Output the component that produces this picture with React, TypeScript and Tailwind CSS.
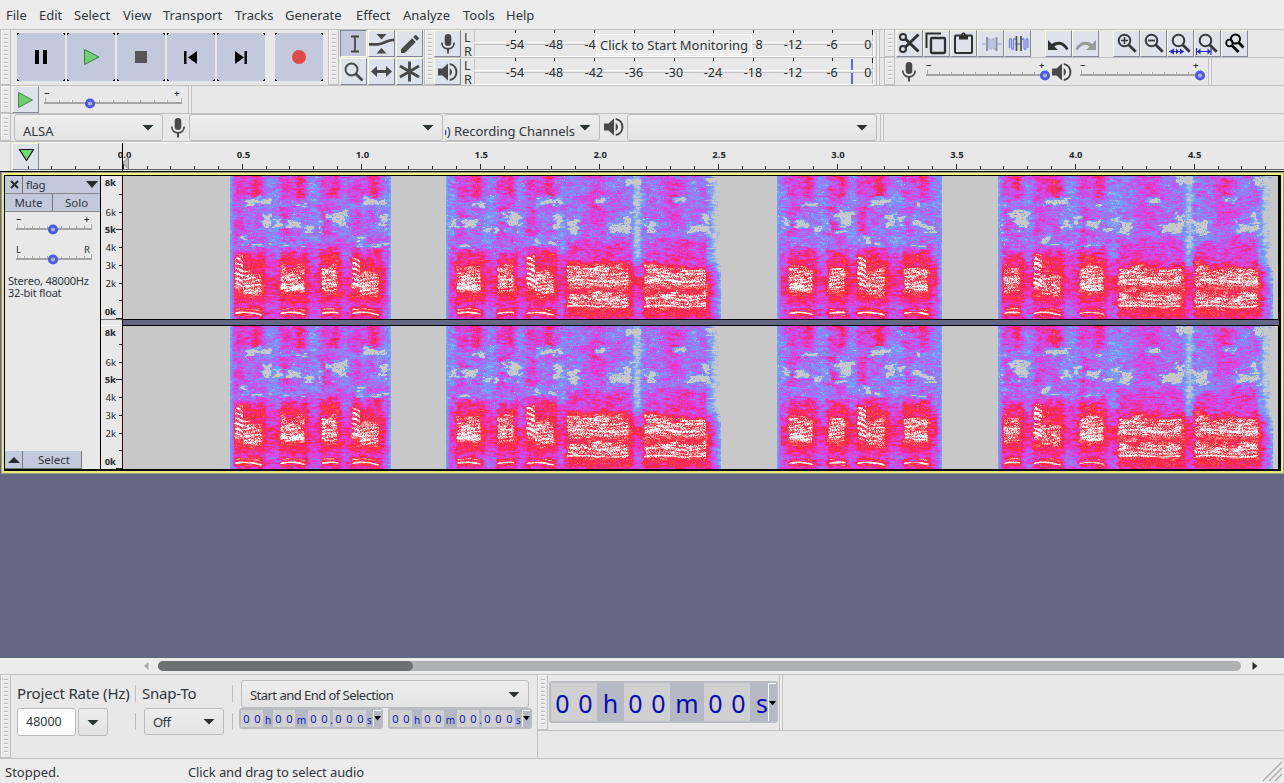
import React, { useMemo } from "react";

const FONT = "font-['Noto_Sans','Open_Sans',sans-serif]";

/* ------------------------------------------------------------------ */
/* Spectrogram                                                         */
/* ------------------------------------------------------------------ */

type Syl = { kind: "A" | "B" | "C" | "L"; a: number; b: number };
type Block = { start: number; end: number; syls: Syl[] };
type Patch = [number, number, number, number, number];

const A = (a: number): Syl => ({ kind: "A", a, b: a + 28 });
const B = (a: number): Syl => ({ kind: "B", a, b: a + 25 });
const C = (a: number): Syl => ({ kind: "C", a, b: a + 17 });
const L = (a: number): Syl => ({ kind: "L", a, b: a + 64 });

const BLOCKS: Block[] = [
  { start: 107, end: 268, syls: [A(111), B(157), C(198), A(228)] },
  { start: 323, end: 598, syls: [B(333), C(374), A(403), L(443), L(521)] },
  { start: 654, end: 819, syls: [B(665), C(705), A(734), B(780)] },
  { start: 875, end: 1150, syls: [C(880), A(910), B(956), L(995), L(1072)] },
];

/* left, top, right, bottom, strength */
const PATCHES: Record<Syl["kind"], Patch[]> = {
  A: [[12, 22, 36, 29, 0.5], [29, 39, 36, 51, 1], [7, 61, 14, 68, 0.7], [16, 66, 38, 69, 0]],
  B: [[-5, 41, 0, 50, 1], [8, 44, 20, 50, 1.2], [24, 50, 33, 56, 0.6], [15, 27, 28, 30, 0.3], [0, 68, 24, 70, 0]],
  C: [[12, 35, 24, 49, 1.2], [5, 37, 12, 42, 0.2], [8, 54, 20, 56, 0.1], [-3, 42, 0, 57, 0.2]],
  L: [[-9, 41, 0, 46, 0.7], [2, 46, 11, 57, 1.6], [30, 22, 41, 26, 0.5], [44, 48, 64, 56, 1.3], [57, 37, 65, 48, 0.8], [60, 1, 74, 8, 0.8]],
};

function hash(x: number, y: number, s: number) {
  let h = (x * 374761393 + y * 668265263 + s * 2147483647) | 0;
  h = Math.imul(h ^ (h >>> 13), 1274126177);
  h = Math.imul(h ^ (h >>> 15), 2246822519);
  return ((h ^ (h >>> 16)) >>> 0) / 4294967296;
}

function noise(x: number, y: number, s: number) {
  const xi = Math.floor(x);
  const yi = Math.floor(y);
  const fx = x - xi;
  const fy = y - yi;
  const u = fx * fx * (3 - 2 * fx);
  const v = fy * fy * (3 - 2 * fy);
  const p = hash(xi, yi, s) * (1 - u) + hash(xi + 1, yi, s) * u;
  const q = hash(xi, yi + 1, s) * (1 - u) + hash(xi + 1, yi + 1, s) * u;
  return (p * (1 - v) + q * v) * 2 - 1;
}

const smooth = (e0: number, e1: number, x: number) => {
  const t = Math.min(1, Math.max(0, (x - e0) / (e1 - e0)));
  return t * t * (3 - 2 * t);
};
const band = (a: number, b: number, x: number, w: number) =>
  smooth(a - w, a + w, x) * (1 - smooth(b - w, b + w, x));

function curve(y: number, pts: [number, number][]) {
  if (y <= pts[0][0]) return pts[0][1];
  for (let i = 1; i < pts.length; i++) {
    if (y <= pts[i][0]) {
      const [y0, v0] = pts[i - 1];
      const [y1, v1] = pts[i];
      return v0 + ((v1 - v0) * (y - y0)) / (y1 - y0);
    }
  }
  return pts[pts.length - 1][1];
}

const GAP: [number, number][] = [[0, 0.33], [20, 0.31], [60, 0.3], [74, 0.37], [90, 0.48], [103, 0.58], [114, 0.56], [124, 0.48], [131, 0.43], [143, 0.46]];
const SHORT: [number, number][] = [[0, 0.48], [18, 0.47], [26, 0.39], [60, 0.38], [70, 0.43], [77, 0.57], [84, 0.63], [118, 0.67], [125, 0.6], [130, 0.5], [134, 0.61], [143, 0.52]];
const LONG: [number, number][] = [[0, 0.35], [20, 0.37], [45, 0.35], [60, 0.37], [66, 0.47], [84, 0.51], [89, 0.64], [93, 0.69], [132, 0.69], [138, 0.63], [143, 0.54]];

function level(x: number, y: number, blk: Block) {
  const streak = noise(x / 5, y / 1.2, 3);
  const fine = hash(x, y, 5) * 2 - 1;
  const mid = noise(x / 3.500, y / 2.200, 7);
  const wide = noise(x / 11, y / 8, 9);
  const yj = y + wide * 3 + mid * 1.5;
  const texture = streak * 0.085 + mid * 0.06 + fine * 0.055 + wide * 0.055;

  let v = curve(yj, GAP) + texture;

  for (const s of blk.syls) {
    const rx = x - s.a;
    const soft = y < 76 ? 5 : 2.500;
    const inside = band(s.a - 1, s.b + 3, x + mid * 2, soft);
    const n = s.b - s.a;
    let t: number;
    if (s.kind === "L") {
      t = curve(yj, LONG) + texture;
      if (y < 62) t += 0.14 * band(22, 38, rx, 9) * band(-4, 50, y, 8);
      if (y > 132) t += 0.07 * band(138.500, 140, y, 0.8);
      const cols = band(0, n - 2, rx, 1.5);
      const upper = band(92, 111, yj, 3);
      const lower = band(117, 131, yj, 2);
      const wob = Math.sin(rx / 9) * 1.1;
      t += (upper + lower) * cols * (0.13 + fine * 0.08 + mid * 0.02 - streak * 0.02 + 0.045 * Math.sin((y + wob) * 1.7));
      t += 0.08 * cols * (band(103, 106, y + wob, 1.5) + band(121, 123, y + wob, 1));
      t += 0.16 * cols * band(129, 130.300, y + wob * 0.6, 0.8);
    } else {
      t = curve(yj, SHORT) + texture;
      if (y < 22) t += 0.12 * band(n * 0.62, n * 0.94, rx, 4);
      if (y > 30 && y < 60) t += 0.1 * band(-2, 9, rx, 4);
      const sweep = s.kind === "A" && rx < 9;
      const coreTop = sweep ? 79 : s.kind === "A" ? 96 : 91;
      const coreBottom = sweep ? 112 : s.kind === "A" ? 119 : 115;
      const core = band(coreTop, coreBottom, yj, 4) * band(0, n - 1, rx, 1.2);
      const slope = sweep ? -Math.pow(rx / 9, 2) * 4 : rx * 0.14;
      const stripe = Math.sin((y + slope) * (sweep ? 1.25 : 1.7) + mid * 0.6);
      t += core * (0.165 + stripe * (sweep ? 0.15 : 0.05) + mid * 0.02 - streak * 0.02 + fine * 0.07);
      if (s.kind === "B") t += 0.11 * band(107, 113, y - rx * 0.1, 2) * band(1, 24, rx, 1);
      if (sweep) t += 0.08 * band(104, 111, y, 2) * band(1, 8, rx, 1);
      const arc = 135.800 + Math.pow(rx / 26 - 0.4, 2) * 7;
      const cols = band(0, n, rx, 2);
      t += 0.38 * band(arc - 0.9, arc + 1.1, y, 0.9) * cols;
      t += 0.22 * band(arc - 4, arc - 3, y, 0.9) * cols;
      t += 0.18 * band(arc + 2.500, arc + 3.500, y, 0.9) * cols;
    }
    v = v * (1 - inside) + t * inside;
    if (s.kind === "L" && rx > 62 && rx < 80 && y < 90) {
      v -= 0.27 * band(67, 75, rx + mid * 1.5, 3) * (0.7 + 0.4 * fine + 0.35 * mid);
    }
  }

  for (const s of blk.syls) {
    const rx = x - s.a;
    for (const p of PATCHES[s.kind]) {
      const jag = noise(x / 3.500, y / 1.800, 17) * 3 + noise(x / 9, y / 5, 23) * 2;
      const d = Math.min(rx - p[0], p[2] - rx, (y - p[1]) * 1.3, (p[3] - y) * 1.3) + jag - 1.5 + p[4] * 1.8;
      if (d > 0.8) v = Math.min(v, 0.04 + (hash(x, y, 21) > 0.92 ? 0.18 : 0));
      else if (d > -2.500) v = Math.min(v, 0.26 + mid * 0.07 - d * 0.05 + fine * 0.06);
    }
  }

  if (hash(x, y, 31) > 0.985 && y < 84) v -= 0.17;
  const edge = x - blk.start;
  if (edge < 4) v = Math.min(v, 0.24 + edge * 0.06 + fine * 0.04);
  const tail = blk.end - x;
  const long = blk.syls[blk.syls.length - 1].kind === "L";
  if (long && tail < 16) {
    const low = 0.18 + tail * 0.035;
    const high = (tail - 2) * 0.028;
    const k = smooth(80, 100, y);
    v = Math.min(v, high * (1 - k) + low * k + streak * 0.12 + mid * 0.05 + fine * 0.05);
  } else if (tail < 6) {
    v = Math.min(v, 0.17 + tail * 0.06 + streak * 0.12);
  }
  return Math.max(0, Math.min(1, v));
}

const STOPS: [number, number, number, number][] = [
  [0, 200, 200, 200],
  [0.08, 200, 200, 200],
  [0.25, 108, 160, 250],
  [0.49, 228, 58, 225],
  [0.66, 252, 38, 60],
  [0.72, 254, 60, 70],
  [0.97, 255, 255, 255],
  [1, 255, 255, 255],
];

function colour(t: number) {
  for (let i = 1; i < STOPS.length; i++) {
    if (t <= STOPS[i][0]) {
      const a = STOPS[i - 1];
      const b = STOPS[i];
      const k = (t - a[0]) / (b[0] - a[0]);
      return `rgb(${[1, 2, 3].map((c) => Math.round(a[c] + (b[c] - a[c]) * k)).join(",")})`;
    }
  }
  return "rgb(255,255,255)";
}

const SHADES = 36;

function useSpectrum() {
  return useMemo(() => {
    const paths: string[][] = Array.from({ length: SHADES + 1 }, () => []);
    for (const blk of BLOCKS) {
      for (let y = 0; y < 143; y++) {
        let from = blk.start;
        let last = -1;
        for (let x = blk.start; x <= blk.end; x++) {
          const q = x === blk.end ? -2 : Math.round(level(x, y, blk) * SHADES);
          if (q !== last) {
            if (last > 2) paths[last].push(`M${from} ${y}h${x - from}v1h${from - x}z`);
            from = x;
            last = q;
          }
        }
      }
    }
    return paths.map((p) => p.join(""));
  }, []);
}

function Spectrogram({ paths, className }: { paths: string[]; className: string }) {
  return (
    <svg width="1155" height="143" viewBox="0 0 1155 143" shapeRendering="crispEdges" className={className}>
      {paths.map((d, i) => (d ? <path key={i} d={d} fill={colour(i / SHADES)} /> : null))}
    </svg>
  );
}

/* ------------------------------------------------------------------ */
/* Small parts                                                         */
/* ------------------------------------------------------------------ */

function Grip({ h, className = "" }: { h: number; className?: string }) {
  const n = Math.floor((h - 6) / 4);
  return (
    <svg width="11" height={h} shapeRendering="crispEdges" className={"shrink-0 " + className}>
      <rect width="11" height={h} fill="#e8e8e8" />
      <path d={`M1.5 0V${h}M0 .5H10`} stroke="#f8f8f8" />
      <path d={`M10.5 0V${h}M0 ${h - 0.5}H10M.5 0V${h}`} stroke="#c0c0c0" />
      {Array.from({ length: n }, (_, i) => (
        <g key={i}>
          <rect x="4" y={4 + i * 4} width="4" height="1" fill="#bcbcbc" />
          <rect x="4" y={5 + i * 4} width="4" height="1" fill="#fafafa" />
        </g>
      ))}
    </svg>
  );
}

function Btn({ children, down }: { children?: React.ReactNode; down?: boolean }) {
  return (
    <div
      className={
        "flex h-[27px] w-[27px] shrink-0 items-center justify-center border " +
        (down
          ? "border-b-[#fdfce8] border-r-[#fdfce8] border-l-[#83879a] border-t-[#83879a] bg-[#c1c9db]"
          : "border-l-[#fbf9df] border-t-[#fbf9df] border-b-[#83879a] border-r-[#83879a] bg-[#dee2ea]")
      }
    >
      {children}
    </div>
  );
}

function Big({ children, className = "" }: { children: React.ReactNode; className?: string }) {
  return (
    <svg width="48" height="48" shapeRendering="crispEdges" className={"bg-[#c1c9db] " + className}>
      <path d="M0 .5h2M.5 0v2M46 .5h2M47.5 0v2M0 47.5h2M.5 46v2M46 47.5h2M47.5 46v2" stroke="#000" />
      <g shapeRendering="auto">{children}</g>
    </svg>
  );
}

const Mic = () => (
  <svg width="22" height="24" viewBox="0 0 22 24" fill="none" stroke="#484848">
    <rect x="7.7" y="2" width="6.6" height="12" rx="3.3" fill="#484848" stroke="none" />
    <path d="M4.8 10.5c0 4 2.6 6.3 6.2 6.3s6.2-2.3 6.2-6.3" strokeWidth="1.7" />
    <path d="M11 16.5V21.500" strokeWidth="2" />
  </svg>
);

const Speaker = () => (
  <svg width="22" height="22" viewBox="0 0 22 22" fill="none" stroke="#484848">
    <path d="M1 7.500h4.500L11 2.500v17l-5.500-5H1z" fill="#484848" stroke="none" />
    <path d="M12.700 6.700q4.600 4.300 0 8.600z" fill="#484848" stroke="none" />
    <path d="M12.700 3c9 1.500 9 14.500 0 16" strokeWidth="2" />
  </svg>
);

const Play = () => (
  <svg width="17" height="18" viewBox="0 0 17 18">
    <path d="M1.500 1.500v15L15.500 9z" fill="#70cf70" stroke="#3e7a3e" strokeWidth=".9" />
  </svg>
);

const Lens = ({ children }: { children?: React.ReactNode }) => (
  <svg width="25" height="25" viewBox="0 0 25 25" fill="none" stroke="#383838">
    <circle cx="10.500" cy="9.500" r="5.800" strokeWidth="2" />
    <path d="M14.700 13.700l7 7" strokeWidth="2.800" />
    {children}
  </svg>
);

function Slider({
  w,
  thumb,
  l = "−",
  r = "+",
  ticks = 11,
  className = "",
}: {
  w: number;
  thumb: number;
  l?: string;
  r?: string;
  ticks?: number;
  className?: string;
}) {
  const weight = l === "L" ? 400 : 600;
  return (
    <svg width={w + 12} height="27" className={"shrink-0 overflow-visible " + className}>
      <text x="0" y="10.500" fontSize="9.500" fill="#252a2d" fontWeight={weight}>{l}</text>
      <text x={w - 8} y="10.500" fontSize="9.500" fill="#252a2d" fontWeight={weight}>{r}</text>
      <g shapeRendering="crispEdges">
        {Array.from({ length: ticks }, (_, i) => {
          const x = Math.round((i * (w - 2)) / (ticks - 1));
          const h = i === 0 || i === ticks - 1 ? 4 : 2;
          return (
            <g key={i}>
              <rect x={x} y={16 - h} width="1" height={h} fill="#fff" />
              <rect x={x + 1} y={16 - h} width="1" height={h} fill="#aaa" />
            </g>
          );
        })}
        <rect y="16" width={w} height="2" fill="#a3a3a3" />
      </g>
      <circle cx={thumb} cy="17.500" r="3.600" fill="#b4b4b8" stroke="#4c5bea" strokeWidth="3" />
    </svg>
  );
}

const Caret = ({ className = "" }: { className?: string }) => (
  <svg width="12" height="7" viewBox="0 0 12 7" className={"shrink-0 " + className}>
    <path d="M.5 1h11L6 6.500z" fill="#2b3033" />
  </svg>
);

function Combo({ children, className = "" }: { children?: React.ReactNode; className?: string }) {
  return (
    <div
      className={
        "flex shrink-0 items-center rounded-[3px] border border-[#bcbcbc] bg-gradient-to-b from-[#eeeeee] to-[#e3e3e3] text-[13px] text-[#30363a] " +
        className
      }
    >
      {children}
    </div>
  );
}

const Divider = () => <div className="h-full w-[4px] shrink-0 border-x border-[#c0c0c0] bg-[#eeeeee]" />;

const METER: [string, number][] = [
  ["-54", 41], ["-48", 80], ["-42", 120], ["-36", 160], ["-30", 200],
  ["-24", 239], ["-18", 279], ["-12", 319], ["-6", 358], ["0", 398],
];

/* Labels left readable around the monitoring hint. */
const METER_HINT: [string, number][] = [["-54", 41], ["-48", 80], ["-4", 116], ["8", 285], ["-12", 319], ["-6", 358], ["0", 398]];

function Meter({ peak, hint }: { peak?: boolean; hint?: boolean }) {
  return (
    <div className="flex h-[28px] border-b border-[#c0c0c0]">
      <Btn>{peak ? <Speaker /> : <Mic />}</Btn>
      <svg width="417" height="27" className="overflow-visible text-[12.5px]">
        <text x="3" y="12" fill="#30363a">L</text>
        <text x="3" y="26" fill="#30363a">R</text>
        <g transform="translate(1 0)">
          <g shapeRendering="crispEdges">
            <path d="M12.500 1V26M12 14.500H412M410.500 1V26" stroke="#c4c4c4" />
            <path d="M12 12.500H412M12 26.500H411M411.500 1V26" stroke="#fff" />
            {METER.map(([, x]) => (
              <path key={x} d={`M${x + 12.500} 0v${x === 398 ? 5 : 3}`} stroke="#252a2d" />
            ))}
          </g>
          {(hint ? METER_HINT : METER).map(([t, x]) => (
            <text key={t} x={x === 398 ? 405.800 : x + 12} y="18.500" textAnchor="middle" fill="#252a2d">{t}</text>
          ))}
          {peak && <path d="M390 1v11M390 15v11" stroke="#6464f0" strokeWidth="2" />}
          {hint && (
            <g>
              <rect x="134.500" y="4.500" width="155" height="20" fill="#ececec" stroke="#fff" />
              <text x="138" y="19.500" fontSize="13" textLength="148" fill="#30363a">Click to Start Monitoring</text>
            </g>
          )}
        </g>
      </svg>
    </div>
  );
}

const MENU: [string, string][] = [
  ["File", "w-[33px]"], ["Edit", "w-[35px]"], ["Select", "w-[49px]"], ["View", "w-[40px]"],
  ["Transport", "w-[72px]"], ["Tracks", "w-[50px]"], ["Generate", "w-[71px]"], ["Effect", "w-[47px]"],
  ["Analyze", "w-[60px]"], ["Tools", "w-[43px]"], ["Help", "w-[40px]"],
];

function TimeRuler() {
  const ticks = [];
  for (let i = -4; i <= 48; i++) {
    const x = Math.round(83.800 + i * 23.800) + 0.5;
    const major = i % 5 === 0;
    ticks.push(<path key={i} d={`M${x} ${major ? 22 : 24}V27`} stroke="#252a2d" shapeRendering="crispEdges" />);
  }
  return (
    <svg width="1245" height="29" className="overflow-visible">
      <path d="M0 .5H1245" stroke="#fafafa" />
      {ticks}
      {Array.from({ length: 10 }, (_, i) => (
        <text key={i} x={85.600 + i * 118.900} y="16" fontSize="9.500" fontWeight="700" textAnchor="middle" fill="#252a2d">
          {(i / 2).toFixed(1)}
        </text>
      ))}
      <path d="M89.500 15v12l-6-6z" fill="#bdbdbd" stroke="#777" strokeWidth=".8" />
      <path d="M0 27.500H1245" stroke="#5c645e" shapeRendering="crispEdges" />
      <path d="M83.500 1V29" stroke="#000" shapeRendering="crispEdges" />
    </svg>
  );
}

const FREQ: [string, number][] = [["8k", 6.500], ["6k", 36], ["5k", 53], ["4k", 71], ["3k", 89], ["2k", 107], ["0k", 135]];

function FreqRuler() {
  return (
    <svg width="21" height="143" className="block shrink-0 bg-[#e8e8e8]">
      {FREQ.map(([t, y]) => {
        const bold = t === "8k" || t === "5k" || t === "0k";
        return (
          <text key={t} x="15" y={y + 3.500} fontSize="9.500" fontWeight={bold ? 700 : 400} textAnchor="end" fill="#252a2d">{t}</text>
        );
      })}
      <path d="M18 18.500h3M18 36.500h3M15 53.500h6M18 71.500h3M18 89.500h3M18 107.500h3M18 124.500h3M15 142.500h6" stroke="#252a2d" shapeRendering="crispEdges" />
    </svg>
  );
}

const SMALL: [string, string, boolean][] = [
  ["00", "w-[22px]", true], ["h", "w-[10px]", false], ["00", "w-[22px]", true], ["m", "w-[13px]", false],
  ["00", "w-[22px]", true], [".", "w-[3px]", false], ["000", "w-[33px]", true], ["s", "w-[7px]", false],
];

function SmallTime() {
  return (
    <div className="flex h-[21px] w-[144px] shrink-0 rounded-[3px] border-2 border-[#b9bcc1] bg-[#b4b9c4] text-[11px] text-[#1414b4]">
      {SMALL.map(([t, w, digit], i) => (
        <div key={i} className={"flex shrink-0 items-center justify-around leading-none " + w + (digit ? " bg-[#d0d0d0]" : " pt-[3px] text-[10px]")}>
          {t.split("").map((c, k) => <span key={k}>{c}</span>)}
        </div>
      ))}
      <div className="flex w-[8px] shrink-0 justify-center border-l border-t border-white pt-[5px]">
        <svg width="7" height="5" className="shrink-0"><path d="M0 0h7L3.500 4.500z" fill="#000" /></svg>
      </div>
    </div>
  );
}

const LARGE: [string, string, boolean][] = [
  ["00", "w-[46px]", true], ["h", "w-[27px]", false], ["00", "w-[46px]", true],
  ["m", "w-[34px]", false], ["00", "w-[46px]", true], ["s", "w-[18px]", false],
];

function LargeTime() {
  return (
    <div className="flex h-[42px] w-[229px] shrink-0 rounded-[3px] border-2 border-[#b9bcc1] bg-[#b4b9c4] text-[25px] text-[#0a0ab4]">
      {LARGE.map(([t, w, digit], i) => (
        <div key={i} className={"flex shrink-0 items-center leading-none pt-[3px] " + w + (digit ? " justify-around bg-[#d0d0d0]" : t === "s" ? " justify-end" : " justify-center")}>
          {t.split("").map((c, k) => <span key={k}>{c}</span>)}
        </div>
      ))}
      <div className="flex w-[8px] shrink-0 justify-center border-l border-t border-white pt-[17px]">
        <svg width="7" height="5" className="shrink-0"><path d="M0 0h7L3.500 4.500z" fill="#000" /></svg>
      </div>
    </div>
  );
}

/* ------------------------------------------------------------------ */
/* Window                                                              */
/* ------------------------------------------------------------------ */

export default function App() {
  const spectrum = useSpectrum();
  return (
    <div className={FONT + " flex h-[783px] w-[1284px] flex-col overflow-hidden bg-[#e8e8e8] text-[13px] text-[#30363a]"}>
      {/* Menu bar */}
      <div className="flex h-[30px] shrink-0 items-center border-b border-[#c0c0c0] bg-[#ececec] pl-[6px] pt-[2px]">
        {MENU.map(([t, w]) => <div key={t} className={w}>{t}</div>)}
      </div>

      {/* Upper toolbars */}
      <div className="flex h-[56px] shrink-0 border-b border-[#c0c0c0]">
        <Grip h={55} />
        <div className="flex w-[318px] gap-[2px] pl-[6px] pt-[3px]">
          <Big><path d="M18 17h4v14h-4zM26 17h4v14h-4z" /></Big>
          <Big><path d="M17.500 16.500v15L32 24z" fill="#70cf70" stroke="#3e7a3e" /></Big>
          <Big><path d="M18 18h12v12h-12z" fill="#555" /></Big>
          <Big><path d="M17 18h2.500v13H17zM30 18v13l-9-6.500z" /></Big>
          <Big><path d="M27.500 18H30v13h-2.500zM18 18v13l9-6.500z" /></Big>
          <Big className="ml-[8px]"><circle cx="24" cy="24" r="7" fill="#e24a4a" /></Big>
        </div>
        <Grip h={55} className="mr-px" />
        <div className="grid h-[56px] w-[85px] grid-cols-[28px_28px_28px] grid-rows-[28px_28px]">
          <Btn down>
            <svg width="20" height="20" fill="none" stroke="#484848" className="ml-[3px]"><path d="M6 2.500h3.500l.5.5.500-.5H14M6 17.500h3.500l.5-.5.5.5H14M10 2v15" strokeWidth="1.800" /></svg>
          </Btn>
          <Btn>
            <svg width="25" height="25" viewBox="0 0 25 25" fill="#484848">
              <path d="M7.500 3h10l-5 5.500zM7.500 22.500h10l-5-5.500z" />
              <path d="M0 13.300h9c6 0 8-4.500 16-4.500" fill="none" stroke="#484848" strokeWidth="2.800" />
            </svg>
          </Btn>
          <Btn>
            <svg width="24" height="24" viewBox="0 0 24 24" fill="#484848"><path d="M3 17.250V21h3.750L17.810 9.940l-3.750-3.750zM20.710 7.040a1 1 0 0 0 0-1.410l-2.340-2.340a1 1 0 0 0-1.410 0l-1.830 1.830 3.750 3.750z" /></svg>
          </Btn>
          <Btn>
            <svg width="25" height="25" fill="none" stroke="#484848"><circle cx="10.500" cy="10.500" r="6" strokeWidth="1.900" /><path d="M15 15l6.500 6.500" strokeWidth="2.600" /></svg>
          </Btn>
          <Btn>
            <svg width="25" height="25"><path d="M2 12.500L8 7v4h9V7l6 5.500L17 18v-4H8v4z" fill="#484848" /></svg>
          </Btn>
          <Btn>
            <svg width="25" height="25" stroke="#484848" strokeWidth="2.900"><path d="M12.500 2.500v20M3 7l19 11M22 7L3 18" /></svg>
          </Btn>
        </div>
        <Grip h={55} className="ml-[-1px]" />
        <div className="ml-[-1px] w-[442px]">
          <Meter hint />
          <Meter peak />
        </div>
        <Divider />
        <div className="w-[405px]">
          <div className="flex h-[28px] border-b border-[#c0c0c0]">
            <Grip h={27} className="ml-[4px]" />
            <div className="flex pl-px">
              <Btn>
                <svg width="25" height="25" fill="none" stroke="#303030" strokeWidth="2">
                  <circle cx="6" cy="6" r="3" /><circle cx="6" cy="18" r="3" /><path d="M8.500 8L21.500 20.500M8.500 16L21.500 3.500" strokeWidth="3" />
                </svg>
              </Btn>
              <Btn>
                <svg width="25" height="25" fill="none" stroke="#303030"><path d="M2.500 17V2.500H17" strokeWidth="2" /><rect x="7" y="7" width="14" height="15" rx="1" strokeWidth="2.300" /></svg>
              </Btn>
              <Btn>
                <svg width="25" height="25" fill="none" stroke="#303030"><rect x="4" y="4.500" width="17" height="17.500" rx="1" strokeWidth="2" /><path d="M8 4h9v4.500H8z" fill="#303030" stroke="none" /><circle cx="12.500" cy="3.800" r="1.500" strokeWidth="1.500" /></svg>
              </Btn>
              <Btn>
                <svg width="25" height="25" fill="none" stroke="#a9b1d6">
                  <path d="M4 13h4M19 13h5" strokeWidth="1.500" />
                  <path d="M10 18V9q1-2.500 2 0v8q1 2.500 2 0V9q1-2.500 2 0v8q1 2.500 2 0" strokeWidth="1.300" />
                  <path d="M9 6v14M18.500 6v14" stroke="#8c8c94" strokeWidth="1.800" />
                </svg>
              </Btn>
              <Btn>
                <svg width="25" height="25" fill="none" stroke="#7b8ce4">
                  <path d="M4.500 17V9q1-3 2 0v8q1 3 2 0V9q1-3 2 0M10.500 13h6M17 9q1-3 2 0v8q1 3 2 0V9q1-3 2 0v8" strokeWidth="1.400" />
                  <path d="M11.500 5v15M16 5v15" stroke="#555" strokeWidth="1.800" />
                </svg>
              </Btn>
            </div>
            <div className="ml-[14px] flex">
              <Btn>
                <svg width="25" height="25"><path d="M2 9v10h10l-3.700-3.600c4-3 8.500-1.500 12 3.600l2.200-1c-3-7-10.500-9.500-16.700-5z" fill="#303030" /></svg>
              </Btn>
              <Btn>
                <svg width="25" height="25"><path d="M23 9v10H13l3.700-3.600c-4-3-8.500-1.500-12 3.600l-2.200-1c3-7 10.500-9.500 16.700-5z" fill="#999" /></svg>
              </Btn>
            </div>
            <div className="ml-[14px] flex">
              <Btn><Lens><path d="M7 9.500h7M10.500 6v7" strokeWidth="1.600" /></Lens></Btn>
              <Btn><Lens><path d="M7 9.500h7" strokeWidth="1.800" /></Lens></Btn>
              <Btn><Lens><path d="M1 20.500h15" stroke="#2b2bc8" /><path d="M1 20.500l5-3v6zM8 17.500l3 3-3 3zM16 20.500l-4-3v6z" fill="#2b2bc8" stroke="none" /></Lens></Btn>
              <Btn><Lens><path d="M2 20.500h14M1.500 17v7M16 17v7" stroke="#2b2bc8" strokeWidth="1.200" /><path d="M2 20.500l3.500-3v6zM16 20.500l-3.500-3v6z" fill="#2b2bc8" stroke="none" /></Lens></Btn>
              <Btn>
                <svg width="25" height="25" fill="none" stroke="#000"><circle cx="13.500" cy="8" r="4.500" strokeWidth="2" /><circle cx="7.500" cy="12" r="3.300" strokeWidth="1.800" /><path d="M16.500 11.500l5 5M10 14.500l6.500 6.500" strokeWidth="2.800" /></svg>
              </Btn>
            </div>
          </div>
          <div className="flex h-[27px]">
            <Grip h={27} className="ml-[4px]" />
            <div className="ml-[3px] w-[28px] pt-[2px]"><Mic /></div>
            <Slider w={121} thumb={119} />
            <div className="ml-[-8px] w-[29px] pt-[3px]"><Speaker /></div>
            <Slider w={121} thumb={120} />
            <div className="ml-[-5px]"><Divider /></div>
          </div>
        </div>
      </div>

      {/* Play-at-speed toolbar */}
      <div className="flex h-[28px] shrink-0 border-b border-[#c0c0c0]">
        <Grip h={27} />
        <div className="ml-px w-[32px]"><Btn><Play /></Btn></div>
        <Slider w={138} thumb={46} />
        <div className="ml-[-6px] h-full"><Divider /></div>
      </div>

      {/* Device toolbar */}
      <div className="flex h-[28px] shrink-0 border-b border-[#c0c0c0]">
        <Grip h={27} />
        <Combo className="ml-[3px] h-[27px] w-[149px] justify-between pl-[8px] pr-[8px]">
          <span className="pt-[8px]">ALSA</span><Caret />
        </Combo>
        <div className="w-[26px] pl-[4px] pt-[2px]"><Mic /></div>
        <Combo className="h-[27px] w-[254px] justify-end pr-[8px]"><Caret /></Combo>
        <Combo className="ml-[2px] h-[27px] w-[155px] overflow-hidden border-l-0">
          <div className="flex h-[21px] w-[130px] justify-end self-end overflow-hidden whitespace-nowrap leading-[25px] tracking-[-0.05px]">(Stereo) Recording Channels</div>
          <Caret className="ml-[4px]" />
        </Combo>
        <div className="w-[27px] pl-[3px] pt-[2px]"><Speaker /></div>
        <Combo className="h-[27px] w-[250px] justify-end pr-[8px]"><Caret /></Combo>
        <div className="ml-[3px] h-full"><Divider /></div>
      </div>

      {/* Timeline */}
      <div className="flex h-[29px] shrink-0 bg-[#e8e8e8]">
        <div className="w-[11px] border-r border-[#d0d0d0]" />
        <div className="ml-px w-[27px] pt-px">
          <Btn><svg width="17" height="14" className="mb-[3px] ml-[2px]"><path d="M1.500 1.500h14l-7 11z" fill="#70dc70" stroke="#151515" strokeWidth="1.200" /></svg></Btn>
        </div>
        <TimeRuler />
      </div>

      {/* Track area */}
      <div className="h-[487px] shrink-0 border-t border-black bg-[#646784]">
        <div className="ml-[2px] mr-px mt-px h-[300px] border-2 border-b-[#e6e472] border-l-[#e6e472] border-r-[#f4f272] border-t-[#f4f272] outline outline-1 outline-[#9d9d86]">
          <div className="flex h-[296px] overflow-hidden border border-b-2 border-r-2 border-black bg-black">
            <div className="flex w-[96px] shrink-0 flex-col border-r border-black bg-[#e8e8e8] text-[11.500px]">
              <div className="flex h-[18px] border-b border-[#888] bg-[#c1c9db]">
                <div className="flex w-[18px] items-center justify-center border-r border-[#777] pl-px">
                  <svg width="9" height="9" stroke="#252a2d" strokeWidth="2"><path d="M1 1l7 7M8 1L1 8" /></svg>
                </div>
                <div className="flex grow items-center justify-between pl-[3px] pr-[2px]">
                  <span className="tracking-[-0.3px]">flag</span>
                  <svg width="12" height="7"><path d="M0 0h12L6 7z" fill="#252a2d" /></svg>
                </div>
              </div>
              <div className="flex h-[18px] border-b border-[#888] bg-[#c1c9db]">
                <div className="flex w-[48px] items-center justify-center border-r border-[#777]">Mute</div>
                <div className="flex grow items-center justify-center">Solo</div>
              </div>
              <div className="flex h-[30px] pl-[11px]"><Slider w={76} thumb={37} /></div>
              <div className="flex h-[30px] pl-[11px]"><Slider w={76} thumb={37} l="L" r="R" /></div>
              <div className="whitespace-nowrap pl-[3px] pt-[3px] text-[11px] leading-[12px] tracking-[-0.22px]">
                Stereo, 48000Hz<br />32-bit float
              </div>
              <div className="mt-auto flex h-[18px]">
                <div className="flex w-[18px] items-center justify-center border-b border-r border-[#777] bg-[#c1c9db]">
                  <svg width="12" height="7"><path d="M0 7h12L6 1z" fill="#252a2d" /></svg>
                </div>
                <div className="flex w-[59px] items-center justify-center border-b border-r border-[#777] bg-[#c1c9db] pl-[4px]">Select</div>
              </div>
            </div>
            <div className="flex w-[21px] shrink-0 flex-col bg-[#e8e8e8]">
              <FreqRuler />
              <div className="h-[7px] shrink-0 border-b border-t border-b-white border-t-[#777]" />
              <FreqRuler />
            </div>
            <div className="flex min-w-0 grow flex-col overflow-hidden border-l border-[#300808]">
              <Spectrogram paths={spectrum} className="block shrink-0 bg-[#c8c8c8]" />
              <div className="h-[7px] shrink-0 border-y border-black bg-[#646784]" />
              <Spectrogram paths={spectrum} className="block shrink-0 bg-[#c8c8c8]" />
            </div>
          </div>
        </div>
      </div>

      {/* Horizontal scrollbar */}
      <div className="flex h-[16px] shrink-0 items-center bg-[#ececec] pl-[143px]">
        <svg width="15" height="10"><path d="M5.500 1v8L1 5z" fill="#aaa" /></svg>
        <div className="h-[10px] w-[1083px] rounded-full bg-[#b0b1b3]">
          <div className="h-[10px] w-[255px] rounded-full bg-[#6d7173]" />
        </div>
        <svg width="20" height="10"><path d="M11.500 1v8l5-4z" fill="#252a2d" /></svg>
      </div>

      {/* Selection toolbar */}
      <div className="flex h-[85px] shrink-0 border-y border-[#c0c0c0]">
        <Grip h={83} />
        <div className="w-[125px] shrink-0 pl-[6px] pt-[7px]">
          <div className="h-[26px] whitespace-nowrap text-[15px] leading-[22px] tracking-[-0.18px]">Project Rate (Hz)</div>
          <div className="flex gap-[2px]">
            <div className="flex h-[28px] w-[59px] items-center rounded-[3px] border border-[#bcbcbc] bg-white pl-[8px] text-[12.500px]">48000</div>
            <Combo className="h-[28px] w-[30px] justify-center"><Caret /></Combo>
          </div>
        </div>
        <div className="flex w-[97px] shrink-0">
          <div className="flex w-px flex-col gap-[11px] pt-[10px] [&>div]:ml-[-1px] [&>div]:h-[17px] [&>div]:w-px [&>div]:bg-[#bcbcbc]"><div /><div /></div>
          <div className="pl-[5px] pt-[7px]">
            <div className="h-[26px] text-[15px] leading-[22px] tracking-[-0.2px]">Snap-To</div>
            <Combo className="ml-[2px] h-[27px] w-[80px] justify-between pl-[8px] pr-[8px]"><span className="pt-[3px] tracking-[-0.6px]">Off</span><Caret /></Combo>
          </div>
        </div>
        <div className="flex w-[304px] shrink-0">
          <div className="flex w-px flex-col gap-[11px] pt-[10px] [&>div]:ml-[-1px] [&>div]:h-[17px] [&>div]:w-px [&>div]:bg-[#bcbcbc]"><div /><div /></div>
          <div className="pl-[5px] pt-[5px]">
            <Combo className="ml-[2px] h-[28px] w-[288px] justify-between pl-[8px] pr-[8px]"><span className="pt-[3px] tracking-[-0.53px]">Start and End of Selection</span><Caret /></Combo>
            <div className="flex gap-[5px]"><SmallTime /><SmallTime /></div>
          </div>
        </div>
        <div className="grow border-l border-[#c0c0c0]">
          <div className="flex h-[56px] border-b border-[#c0c0c0]">
            <Grip h={55} className="ml-[-1px]" />
            <div className="pl-[1px] pt-[6px]"><LargeTime /></div>
            <div className="ml-px h-full"><Divider /></div>
          </div>
        </div>
      </div>

      {/* Status bar */}
      <div className="flex grow items-center bg-[#ececec] pl-[5px]">
        <div className="w-[183px] pt-[3px]">Stopped.</div>
        <div className="grow pt-[3px] tracking-[-0.1px]">Click and drag to select audio</div>
        <svg width="22" height="22" stroke="#aaa"><path d="M1 21L20 2M7 21L20 8M13 21l7-7" strokeWidth="1.300" /></svg>
      </div>
    </div>
  );
}
